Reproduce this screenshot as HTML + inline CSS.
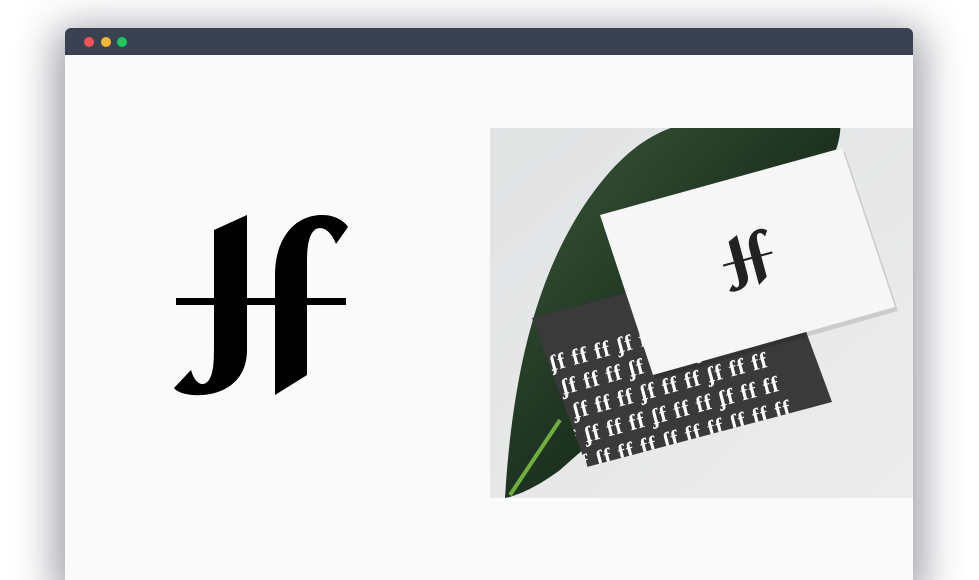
<!DOCTYPE html>
<html><head><style>
html,body{margin:0;padding:0;width:979px;height:580px;overflow:hidden;background:#fff;}
.win{position:absolute;left:65px;top:28px;width:848px;height:552px;border-radius:6px 6px 0 0;box-shadow:0 10px 40px 10px rgba(40,45,60,.45);background:#fafafa;overflow:hidden;}
.bar{height:27px;background:#3a4252;position:relative;}
.dot{position:absolute;top:9px;width:10px;height:10px;border-radius:50%;}
</style></head><body>
<div class="win">
<div class="bar">
<div class="dot" style="left:19px;background:#ef5456"></div>
<div class="dot" style="left:36px;background:#f7b43a"></div>
<div class="dot" style="left:52px;background:#22c55e"></div>
</div>
</div>
<svg width="979" height="580" style="position:absolute;left:0;top:0">
<defs>
<linearGradient id="bg" x1="0" y1="0" x2="1" y2="1"><stop offset="0" stop-color="#e2e3e4"/><stop offset="1" stop-color="#ececec"/></linearGradient>
<linearGradient id="lf" x1="0" y1="0" x2="1" y2="1"><stop offset="0" stop-color="#3d5a3c"/><stop offset=".5" stop-color="#1e3320"/><stop offset="1" stop-color="#0f1c11"/></linearGradient>
<clipPath id="c"><rect x="490" y="128" width="423" height="370"/></clipPath>
<clipPath id="card"><polygon points="532,318 777,253 832,402 587,467"/></clipPath>
</defs>
<g fill="#000">
<rect x="176" y="298" width="170" height="7"/>
<path d="M214,230 L247,215 L247,350 C247,385 218,397 192,395 C182,394 176,391 174,388 L191,370 C195,384 203,388 209,380 C214,372 214,360 214,340 Z"/>
<path d="M275,395 L275,275 C275,238 295,215 322,215 C336,215 345,222 348,227 L336,244 C331,231 323,226 316,229 C309,233 307,246 307,262 L307,375 Z"/>
</g>
<g clip-path="url(#c)">
<rect x="490" y="128" width="423" height="370" fill="url(#bg)"/>
<path d="M505,498 C512,380 535,270 595,190 C625,150 655,128 700,120 L840,120 C845,160 800,210 770,250 C720,320 640,400 560,470 C540,485 520,495 505,498 Z" fill="url(#lf)"/>
<path d="M510,495 L560,420" stroke="#6fae3e" stroke-width="4"/>
<polygon points="532,318 777,253 832,402 587,467" fill="#3a3a3a"/>
<g clip-path="url(#card)">
<g fill="#fff" font-family="Liberation Serif,serif" font-weight="bold" font-size="22" letter-spacing="1" transform="rotate(-15 680 380)">
<text x="535" y="338">ff ʄf ff ff ʄf ff ff ʄf ff ff</text>
<text x="540" y="364">ff ʄf ff ff ʄf ff ff ʄf ff ff</text>
<text x="545" y="390">ff ʄf ff ff ʄf ff ff ʄf ff ff</text>
<text x="550" y="416">ff ʄf ff ff ʄf ff ff ʄf ff ff</text>
<text x="555" y="442">ff ʄf ff ff ʄf ff ff ʄf ff ff</text>
</g>
</g>
<polygon points="603,219 845,152 898,311 656,379" fill="#000" opacity=".12"/>
<polygon points="600,215 842,148 895,307 653,375" fill="#f6f6f6"/>
<g fill="#222" transform="rotate(-15 748 260) translate(748 260) scale(.3) translate(-261 -305)">
<rect x="176" y="298" width="170" height="7"/>
<path d="M214,230 L247,215 L247,350 C247,385 218,397 192,395 C182,394 176,391 174,388 L191,370 C195,384 203,388 209,380 C214,372 214,360 214,340 Z"/>
<path d="M275,395 L275,275 C275,238 295,215 322,215 C336,215 345,222 348,227 L336,244 C331,231 323,226 316,229 C309,233 307,246 307,262 L307,375 Z"/>
</g>
</g>
</svg>
</body></html>
